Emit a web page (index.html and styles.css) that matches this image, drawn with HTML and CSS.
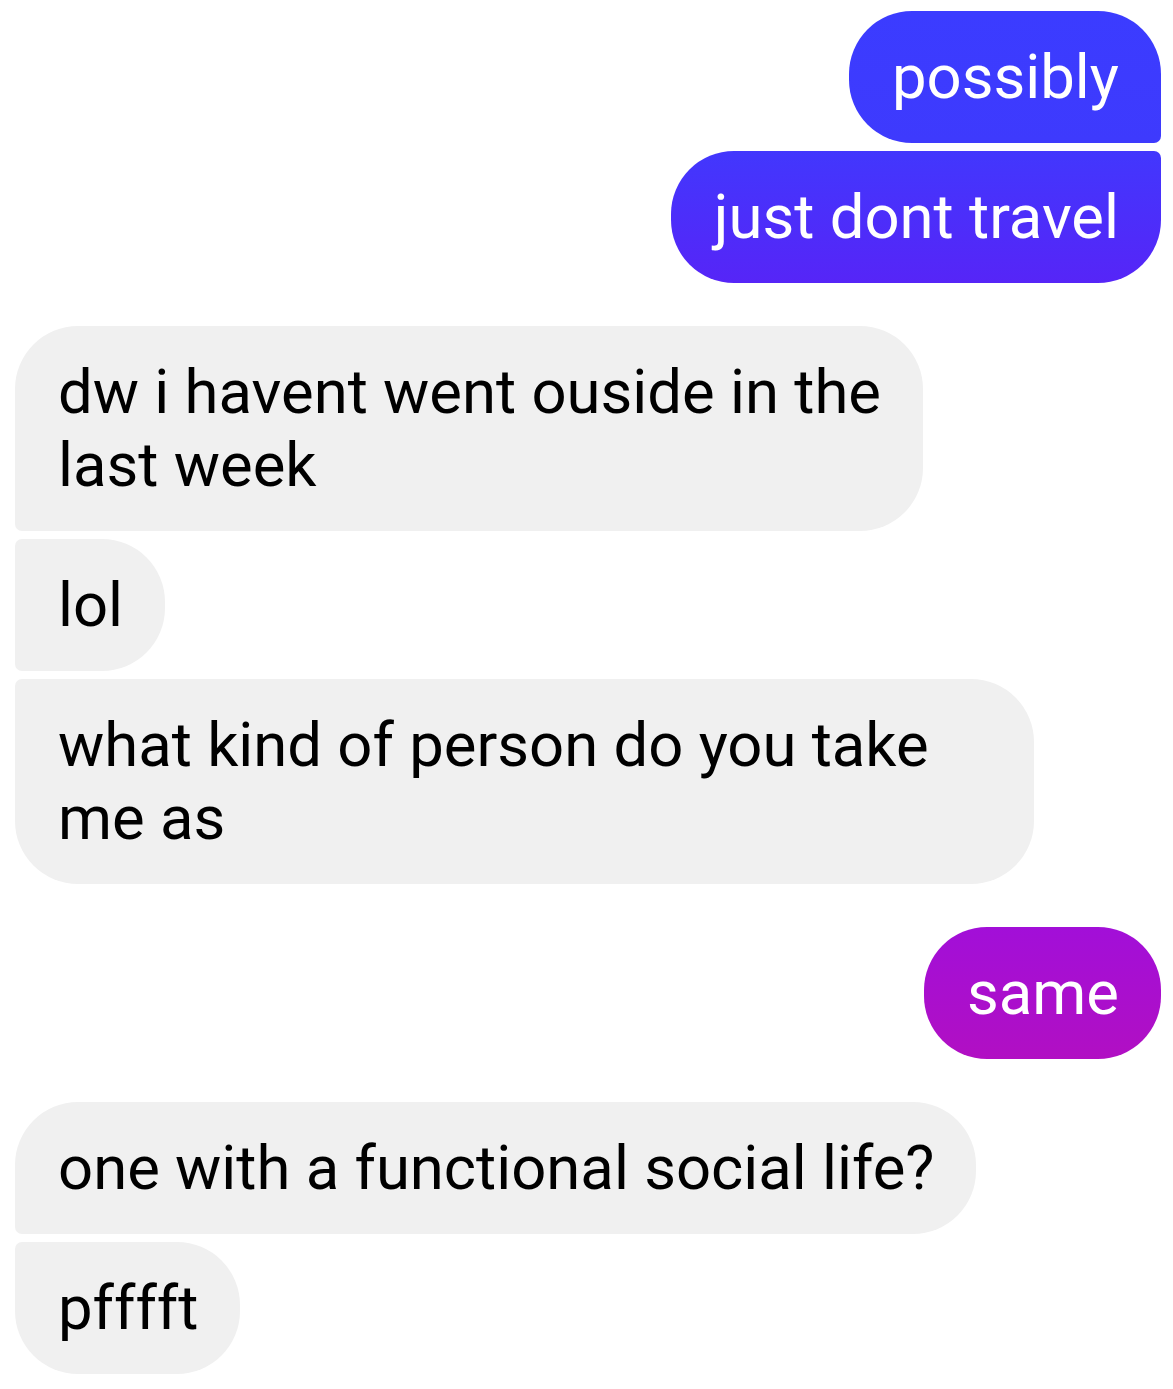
FILE: index.html
```html
<!DOCTYPE html>
<html>
<head>
<meta charset="utf-8">
<link rel="stylesheet" href="styles.css">
</head>
<body>
<div class="thread">
  <div class="group out">
    <div class="bubble out first blue1">possibly</div>
    <div class="bubble out last blue2">just dont travel</div>
  </div>
  <div class="group in">
    <div class="bubble in first">dw i havent went ouside in the<br>last week</div>
    <div class="bubble in mid">lol</div>
    <div class="bubble in last wide">what kind of person do you take<br>me as</div>
  </div>
  <div class="group out">
    <div class="bubble out single purple">same</div>
  </div>
  <div class="group in">
    <div class="bubble in first">one with a functional social life?</div>
    <div class="bubble in last">pfffft</div>
  </div>
</div>
</body>
</html>
```

FILE: styles.css
```css
html, body {
  margin: 0;
  padding: 0;
  background: #ffffff;
}

.thread {
  display: flex;
  flex-direction: column;
  gap: 43px;
  padding: 11px 12px 0 15px;
  font-family: Roboto, "Noto Sans", sans-serif;
  font-size: 61.6px;
  line-height: 73px;
}

.group {
  display: flex;
  flex-direction: column;
  gap: 8px;
}

.group.out { align-items: flex-end; }
.group.in { align-items: flex-start; }

.bubble {
  padding: 29.5px 42px 29.5px 43px;
  border-radius: 63px;
  white-space: nowrap;
}

.bubble.wide {
  box-sizing: border-box;
  width: 1019px;
}

.bubble.in {
  background: #f0f0f0;
  color: #000000;
}

.bubble.out {
  color: #ffffff;
}

.bubble.in.first { border-bottom-left-radius: 7px; }
.bubble.in.mid { border-top-left-radius: 7px; border-bottom-left-radius: 7px; }
.bubble.in.last { border-top-left-radius: 7px; }

.bubble.out.first { border-bottom-right-radius: 7px; }
.bubble.out.last { border-top-right-radius: 7px; }

.blue1 { background: linear-gradient(180deg, #3b3cff 0%, #3e3afd 100%); }
.blue2 { background: linear-gradient(180deg, #4237fd 0%, #5625f7 100%); }
.purple { background: linear-gradient(180deg, #a20fd8 0%, #b10fc3 100%); }
```
